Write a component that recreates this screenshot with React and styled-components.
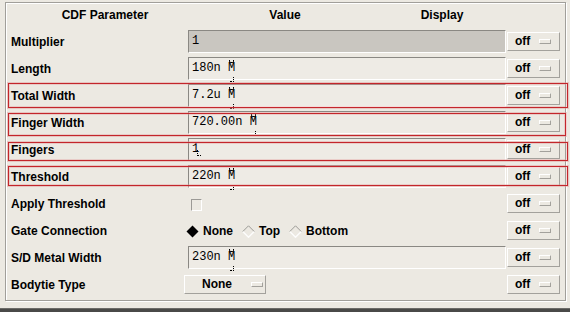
import React from 'react'
import styled, { createGlobalStyle } from 'styled-components'

const GlobalStyle = createGlobalStyle`
  html, body {
    margin: 0;
    padding: 0;
    background: #ece9e2;
  }
  * {
    box-sizing: border-box;
  }
`

const rows = [
  { label: 'Multiplier', kind: 'field', value: '1', disabled: true },
  { label: 'Length', kind: 'field', value: '180n', unit: true },
  { label: 'Total Width', kind: 'field', value: '7.2u', unit: true, mark: { top: 1, bottom: 1, right: -3 } },
  { label: 'Finger Width', kind: 'field', value: '720.00n', unit: true, mark: { top: 4, bottom: 0, right: -1 } },
  { label: 'Fingers', kind: 'field', value: '1', cursor: true, mark: { top: 6, bottom: 2, right: -3 } },
  { label: 'Threshold', kind: 'field', value: '220n', unit: true, mark: { top: 3, bottom: 4, right: -3 } },
  { label: 'Apply Threshold', kind: 'check' },
  { label: 'Gate Connection', kind: 'radio', options: ['None', 'Top', 'Bottom'], selected: 'None' },
  { label: 'S/D Metal Width', kind: 'field', value: '230n', unit: true },
  { label: 'Bodytie Type', kind: 'menu', value: 'None' },
]

function Diamond({ on }) {
  return (
    <svg width="13" height="13" viewBox="0 0 13 13">
      {on ? (
        <polygon points="6.5,0.5 12.5,6.5 6.5,12.5 0.5,6.5" fill="#000" />
      ) : (
        <>
          <polyline points="0.8,6.5 6.5,12.2 12.2,6.5" fill="none" stroke="#fdfdfc" strokeWidth="1.4" />
          <polyline points="0.8,6.5 6.5,0.8 12.2,6.5" fill="none" stroke="#9c9a96" strokeWidth="1" />
        </>
      )}
    </svg>
  )
}

function ValueCell({ row }) {
  if (row.kind === 'field') {
    return (
      <Field disabled={row.disabled}>
        {row.value}
        {row.unit && (
          <>
            {' '}
            <Unit>M</Unit>
          </>
        )}
        {row.cursor && <Cursor />}
      </Field>
    )
  }
  if (row.kind === 'check') return <Check />
  if (row.kind === 'radio') {
    return (
      <RadioGroup>
        {row.options.map(opt => (
          <RadioItem key={opt}>
            <Diamond on={opt === row.selected} />
            <RadioText>{opt}</RadioText>
          </RadioItem>
        ))}
      </RadioGroup>
    )
  }
  return (
    <MenuButton width={82} pad={17} gap={19}>
      {row.value}
      <Indicator />
    </MenuButton>
  )
}

export default function App() {
  return (
    <Page>
      <GlobalStyle />
      <Frame>
        <Header>
          <HeadCell width={198}>CDF Parameter</HeadCell>
          <HeadCell width={162}>Value</HeadCell>
          <HeadCell width={152}>Display</HeadCell>
        </Header>
        {rows.map(row => (
          <Row key={row.label} mark={row.mark}>
            <Label>{row.label}</Label>
            <ValueSlot>
              <ValueCell row={row} />
            </ValueSlot>
            <DisplaySlot>
              <MenuButton width={53} pad={7} gap={9}>
                off
                <Indicator />
              </MenuButton>
            </DisplaySlot>
          </Row>
        ))}
      </Frame>
      <Spacer />
      <BottomBar />
    </Page>
  )
}

const Page = styled.div`
  width: 570px;
  height: 312px;
  overflow: hidden;
  display: flex;
  flex-direction: column;
  background: #ece9e2;
  font-family: 'Liberation Sans', Arial, sans-serif;
  color: #000;
`

const Frame = styled.div`
  margin: 2px 4px 0 5px;
  height: 299px;
  border: 1px solid #a19f9a;
  box-shadow: inset 1px 1px 0 #ffffff, 1px 1px 0 #ffffff;
  display: flex;
  flex-direction: column;
`

const Header = styled.div`
  height: 25px;
  display: flex;
  align-items: center;
  padding-bottom: 1px;
`

const HeadCell = styled.div`
  width: ${props => props.width}px;
  text-align: center;
  font-size: 12px;
  font-weight: 700;
`

const Row = styled.div`
  position: relative;
  height: 27px;
  display: grid;
  grid-template-columns: 178px 322px 1fr;
  align-items: center;

  ${props =>
    props.mark &&
    `
    &::after {
      content: '';
      position: absolute;
      left: 2px;
      right: ${props.mark.right}px;
      top: ${props.mark.top}px;
      bottom: ${props.mark.bottom}px;
      border: 1px solid #c3262b;
      box-shadow: 0 0 0 1px rgba(226, 150, 150, 0.45), inset 0 0 0 1px rgba(226, 150, 150, 0.35);
      pointer-events: none;
    }
  `}
`

const Label = styled.div`
  padding-left: 5px;
  font-size: 12px;
  font-weight: 700;
  white-space: nowrap;
`

const ValueSlot = styled.div`
  display: flex;
  align-items: center;
`

const DisplaySlot = styled.div`
  display: flex;
  align-items: center;
  padding-left: 1px;
`

const Field = styled.div`
  margin-left: 4px;
  width: 318px;
  height: 23px;
  padding-left: 3px;
  border-top: 1px solid #8a8883;
  border-left: 1px solid #8a8883;
  border-bottom: 1px solid #ffffff;
  border-right: 1px solid #ffffff;
  background: ${props => (props.disabled ? '#c9c6c0' : '#eeebe5')};
  font-family: 'Liberation Mono', 'Courier New', monospace;
  font-size: 12px;
  line-height: 21px;
  white-space: pre;
`

const Unit = styled.span`
  position: relative;
  display: inline-block;

  &::before {
    content: '';
    position: absolute;
    right: 1px;
    top: 2px;
    width: 3px;
    height: 2px;
    border-bottom: 1px solid #000;
    border-left: 1px solid #000;
    border-right: 1px solid #000;
    border-radius: 0 0 2px 2px;
  }

  &::after {
    content: '';
    position: absolute;
    right: 1px;
    bottom: -3px;
    width: 3px;
    height: 4px;
    border-bottom: 1px dotted #000;
    border-right: 1px dotted #000;
  }
`

const Cursor = styled.span`
  position: relative;
  display: inline-block;
  width: 0;
  height: 12px;
  vertical-align: baseline;

  &::after {
    content: '';
    position: absolute;
    left: -2px;
    bottom: -4px;
    width: 3px;
    height: 5px;
    border-bottom: 1px dotted #000;
    border-left: 1px dotted #000;
  }
`

const Check = styled.div`
  margin: 2px 0 0 7px;
  width: 11px;
  height: 12px;
  border-top: 1px solid #9c9a96;
  border-left: 1px solid #9c9a96;
  border-bottom: 1px solid #ffffff;
  border-right: 1px solid #ffffff;
`

const RadioGroup = styled.div`
  display: flex;
  align-items: center;
  gap: 9px;
  padding-left: 2px;
  padding-top: 1px;
`

const RadioItem = styled.div`
  display: flex;
  align-items: center;
  gap: 4px;

  svg {
    display: block;
  }
`

const RadioText = styled.span`
  font-size: 12px;
  font-weight: 700;
`

const MenuButton = styled.div`
  width: ${props => props.width}px;
  height: 19px;
  display: flex;
  align-items: center;
  gap: ${props => props.gap}px;
  padding-left: ${props => props.pad}px;
  border-top: 1px solid #ffffff;
  border-left: 1px solid #ffffff;
  border-bottom: 1px solid #a3a19c;
  border-right: 1px solid #a3a19c;
  font-size: 12px;
  font-weight: 700;
  margin-top: -1px;
`

const Indicator = styled.span`
  width: 12px;
  height: 5px;
  border-top: 1px solid #ffffff;
  border-left: 1px solid #ffffff;
  border-bottom: 1px solid #a3a19c;
  border-right: 1px solid #a3a19c;
  margin-top: 1px;
`

const Spacer = styled.div`
  flex: 1;
`

const BottomBar = styled.div`
  height: 4px;
  background: #4a4a48;
  border-top: 1px solid #6c6b68;
`
